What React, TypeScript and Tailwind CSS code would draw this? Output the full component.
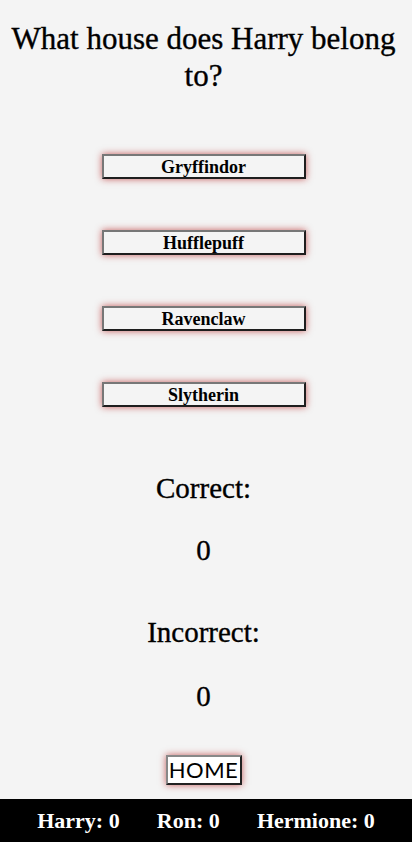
const HOUSES = ['Gryffindor', 'Hufflepuff', 'Ravenclaw', 'Slytherin']

const SCORES = [
  { name: 'Harry', score: 0 },
  { name: 'Ron', score: 0 },
  { name: 'Hermione', score: 0 },
]

export default function App() {
  return (
    <div className="min-h-[842px] w-full bg-[#f4f4f4] flex flex-col font-['Liberation_Serif',serif] text-black">
      <div className="pr-[5px] flex flex-col">
        {/* ── Question ─────────────────────────────────────────── */}
        <h1 className="pt-[20px] px-2 text-center text-[31px] leading-[37px] font-normal [-webkit-text-stroke:0.35px_black]">
          What house does Harry belong to?
        </h1>

        {/* ── Answers ──────────────────────────────────────────── */}
        <div className="mt-[60px] flex flex-col items-center gap-[51px]">
          {HOUSES.map(h => (
            <button
              key={h}
              className="w-[204px] h-[25px] bg-[#f4f4f4] border-2 border-t-[#777] border-l-[#777] border-b-[#1e1e1e] border-r-[#1e1e1e] shadow-[0_0_7px_rgba(180,30,30,0.7)] text-[18px] leading-none font-bold"
            >
              {h}
            </button>
          ))}
        </div>

        {/* ── Tally ────────────────────────────────────────────── */}
        <div className="mt-[64px] flex flex-col items-center text-[29px] font-normal [-webkit-text-stroke:0.35px_black]">
          <div className="h-[34px] leading-[34px]">Correct:</div>
          <div className="mt-[28px] h-[34px] leading-[34px]">0</div>
          <div className="mt-[48px] h-[34px] leading-[34px]">Incorrect:</div>
          <div className="mt-[30px] h-[34px] leading-[34px]">0</div>
        </div>

        <div className="mt-[42px] flex justify-center">
          <button className="w-[76px] h-[30px] bg-white border-2 border-t-[#888] border-l-[#888] border-b-[#222] border-r-[#222] shadow-[0_0_7px_rgba(180,30,30,0.7)] font-['Lato',sans-serif] text-[22px] leading-none tracking-[0.5px]">
            HOME
          </button>
        </div>
      </div>

      {/* ── Footer ───────────────────────────────────────────── */}
      <footer className="mt-auto h-[43px] bg-black text-white flex items-center justify-evenly text-[22px] font-bold">
        {SCORES.map(s => (
          <span key={s.name}>
            {s.name}: {s.score}
          </span>
        ))}
      </footer>
    </div>
  )
}
